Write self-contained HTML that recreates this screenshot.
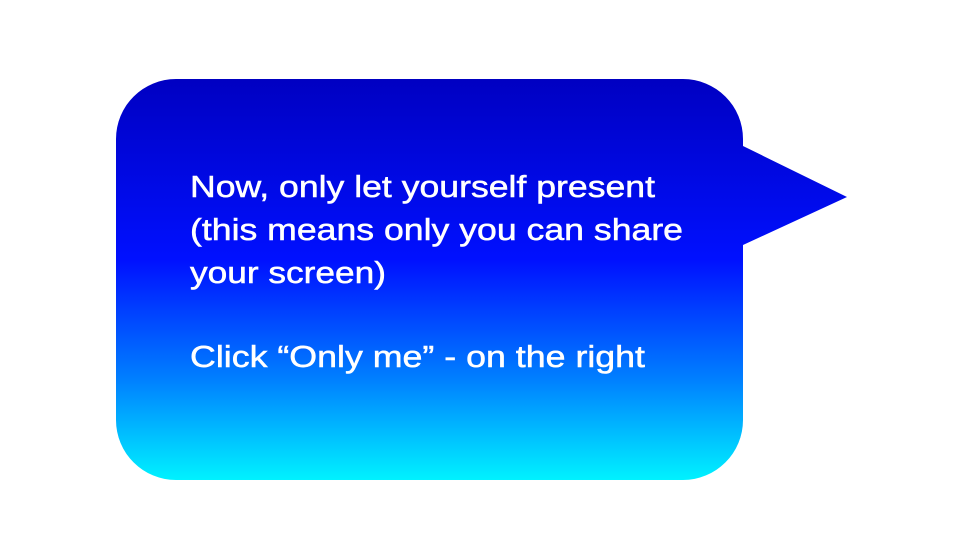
<!DOCTYPE html>
<html><head><meta charset="utf-8"><style>
html,body{margin:0;padding:0;background:#fff;width:960px;height:540px;overflow:hidden}
svg{display:block}
text{font-family:"Liberation Sans",sans-serif;font-size:31px;fill:#fff;stroke:#fff;stroke-width:0.5}
</style></head><body>
<svg width="960" height="540" viewBox="0 0 960 540">
<defs><linearGradient id="g" x1="0" y1="79" x2="0" y2="480" gradientUnits="userSpaceOnUse">
<stop offset="0" stop-color="#0000c2"/>
<stop offset="0.45" stop-color="#0010ff"/>
<stop offset="0.75" stop-color="#0080ff"/>
<stop offset="1" stop-color="#00f2ff"/>
</linearGradient></defs>
<path d="M176 79 H683 A60 60 0 0 1 743 139 V146 L847 197 L743 245 V420 A60 60 0 0 1 683 480 H176 A60 60 0 0 1 116 420 V139 A60 60 0 0 1 176 79 Z" fill="url(#g)"/>
<text x="190" y="197" textLength="465" lengthAdjust="spacingAndGlyphs">Now, only let yourself present</text>
<text x="190" y="240" textLength="493" lengthAdjust="spacingAndGlyphs">(this means only you can share</text>
<text x="190" y="283" textLength="196" lengthAdjust="spacingAndGlyphs">your screen)</text>
<text x="190" y="367" textLength="455" lengthAdjust="spacingAndGlyphs">Click “Only me” - on the right</text>
</svg>
</body></html>
